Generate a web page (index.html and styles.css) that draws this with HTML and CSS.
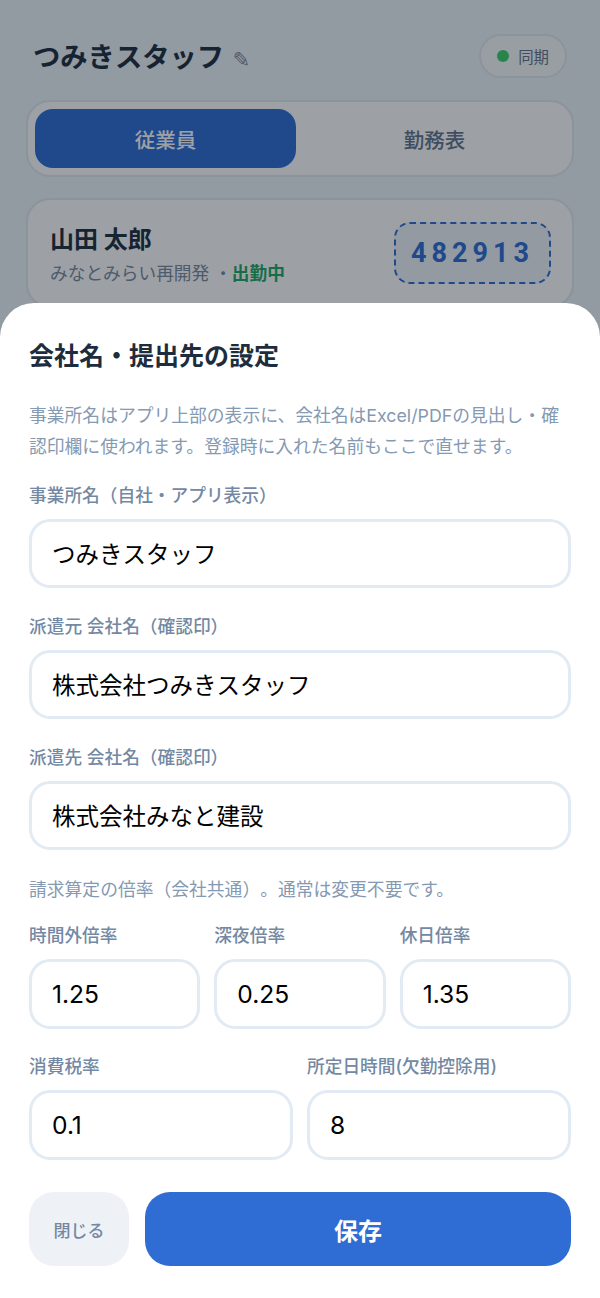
FILE: index.html
```html
<!DOCTYPE html>
<html lang="ja">
<head>
    <meta charset="UTF-8">
    <meta name="viewport" content="width=device-width, initial-scale=1.0">
    <title>つみきスタッフ</title>
    <link rel="stylesheet" href="styles.css">
</head>
<body>
    <div class="app">
        <header class="app-header">
            <h1 class="app-title">つみきスタッフ <span class="edit-mark">✎</span></h1>
            <div class="sync-pill"><span class="sync-dot"></span>同期</div>
        </header>
        <nav class="tabs">
            <div class="tab tab-active">従業員</div>
            <div class="tab">勤務表</div>
        </nav>
        <div class="staff-card">
            <div class="staff-info">
                <div class="staff-name">山田 太郎</div>
                <div class="staff-sub">みなとみらい再開発 ・<span class="staff-status">出勤中</span></div>
            </div>
            <div class="staff-code">482913</div>
        </div>
    </div>

    <div class="overlay"></div>

    <div class="sheet">
        <h2 class="sheet-title">会社名・提出先の設定</h2>
        <p class="hint hint-top">事業所名はアプリ上部の表示に、会社名はExcel/PDFの見出し・確認印欄に使われます。登録時に入れた名前もここで直せます。</p>

        <div class="field">
            <label class="field-label" for="office">事業所名（自社・アプリ表示）</label>
            <input class="field-input" id="office" type="text" value="つみきスタッフ">
        </div>
        <div class="field">
            <label class="field-label" for="from">派遣元 会社名（確認印）</label>
            <input class="field-input" id="from" type="text" value="株式会社つみきスタッフ">
        </div>
        <div class="field">
            <label class="field-label" for="to">派遣先 会社名（確認印）</label>
            <input class="field-input" id="to" type="text" value="株式会社みなと建設">
        </div>

        <p class="hint hint-rates">請求算定の倍率（会社共通）。通常は変更不要です。</p>

        <div class="row row-3">
            <div class="field">
                <label class="field-label" for="over">時間外倍率</label>
                <input class="field-input field-num" id="over" type="text" value="1.25">
            </div>
            <div class="field">
                <label class="field-label" for="night">深夜倍率</label>
                <input class="field-input field-num" id="night" type="text" value="0.25">
            </div>
            <div class="field">
                <label class="field-label" for="holiday">休日倍率</label>
                <input class="field-input field-num" id="holiday" type="text" value="1.35">
            </div>
        </div>
        <div class="row row-2">
            <div class="field">
                <label class="field-label" for="tax">消費税率</label>
                <input class="field-input field-num" id="tax" type="text" value="0.1">
            </div>
            <div class="field">
                <label class="field-label" for="hours">所定日時間(欠勤控除用)</label>
                <input class="field-input field-num" id="hours" type="text" value="8">
            </div>
        </div>

        <div class="actions">
            <button class="btn btn-close">閉じる</button>
            <button class="btn btn-save">保存</button>
        </div>
    </div>
</body>
</html>
```

FILE: styles.css
```css
* {
    box-sizing: border-box;
}
html, body {
    height: 100%;
}
body {
    font-family: Inter, "Noto Sans CJK JP", sans-serif;
    text-spacing-trim: space-all;
    background-color: #edf3fb;
    color: #1e2d3d;
    margin: 0;
    overflow: hidden;
}

/* page behind the sheet */
.app {
    padding: 34px 26px 0;
}
.app-header {
    display: flex;
    justify-content: space-between;
    align-items: center;
    padding: 0 7px;
    height: 44px;
    margin-bottom: 22px;
}
.app-title {
    font-size: 27.3px;
    font-weight: 700;
    margin: 0;
    padding-top: 6px;
    line-height: 44px;
}
.edit-mark {
    font-family: "DejaVu Sans", sans-serif;
    font-size: 21px;
    font-weight: 400;
    color: #7a8aa0;
    margin-left: 2px;
}
.sync-pill {
    display: flex;
    align-items: center;
    gap: 9px;
    height: 44px;
    padding: 0 16px;
    font-size: 15.4px;
    color: #64748b;
    background: #f8fafc;
    border: 2px solid #e2e8f0;
    border-radius: 22px;
}
.sync-dot {
    width: 12px;
    height: 12px;
    border-radius: 50%;
    background: #3bd06a;
}
.tabs {
    display: flex;
    gap: 8px;
    height: 77px;
    padding: 7px;
    background: #fff;
    border: 2px solid #e2e8f0;
    border-radius: 24px;
    margin-bottom: 21px;
}
.tab {
    flex: 1;
    display: flex;
    align-items: center;
    justify-content: center;
    border-radius: 18px;
    font-size: 20.5px;
    font-weight: 500;
    color: #64748b;
}
.tab-active {
    background: #2f6dd5;
    color: #fff;
}
.staff-card {
    display: flex;
    justify-content: space-between;
    align-items: center;
    height: 110px;
    padding: 0 21px 0 22px;
    background: #fff;
    border: 2px solid #e2e8f0;
    border-radius: 24px;
}
.staff-info {
    padding-top: 5px;
}
.staff-name {
    font-size: 24px;
    font-weight: 700;
    line-height: 32px;
    margin-bottom: 5px;
}
.staff-sub {
    font-size: 17.7px;
    line-height: 26px;
    color: #7a8aa0;
}
.staff-status {
    color: #22a866;
    font-weight: 700;
}
.staff-code {
    width: 157px;
    height: 62px;
    display: flex;
    align-items: center;
    justify-content: center;
    font-family: Roboto, sans-serif;
    font-size: 27px;
    font-weight: 700;
    letter-spacing: 5px;
    color: #2f6dd5;
    background: #eef3fb;
    border: 2px dashed #2f6dd5;
    border-radius: 16px;
}
.overlay {
    position: fixed;
    inset: 0;
    background: rgba(10, 20, 30, 0.4);
}

/* bottom sheet */
.sheet {
    position: fixed;
    left: 0;
    right: 0;
    bottom: 0;
    background: #fff;
    border-radius: 34px 34px 0 0;
    padding: 36px 29px 32px;
}
.sheet-title {
    font-size: 25px;
    font-weight: 700;
    line-height: 34px;
    margin: 0 0 27px;
}
.hint {
    font-size: 17.8px;
    line-height: 31px;
    color: #8499b2;
    margin: 0;
}
.hint-top {
    margin-bottom: 21.5px;
}
.hint-rates {
    margin-top: -3px;
    margin-bottom: 19.5px;
}
.field {
    margin-bottom: 26.5px;
    min-width: 0;
}
.field-label {
    display: block;
    font-size: 17.7px;
    font-weight: 500;
    line-height: 24px;
    color: #7388a3;
    margin-bottom: 11px;
}
.field-input {
    display: block;
    width: 100%;
    height: 69.5px;
    padding: 0 20px;
    font-family: inherit;
    font-size: 23.5px;
    color: #000;
    background: #fff;
    border: 3px solid #e2eaf4;
    border-radius: 21px;
    outline: none;
}
.field-num {
    font-size: 24.6px;
}
.row {
    display: grid;
    gap: 14px;
}
.row-3 {
    grid-template-columns: repeat(3, 1fr);
}
.row-2 {
    grid-template-columns: repeat(2, 1fr);
}
.row-2 .field {
    margin-bottom: 0;
}
.actions {
    display: flex;
    gap: 16px;
    margin-top: 32.5px;
}
.btn {
    height: 74px;
    border: none;
    border-radius: 25px;
    font-family: inherit;
    cursor: pointer;
}
.btn-close {
    width: 100px;
    font-size: 17px;
    font-weight: 500;
    color: #7388a3;
    background: #eef2f7;
}
.btn-save {
    flex: 1;
    font-size: 24px;
    font-weight: 700;
    color: #fff;
    background: #2f6dd5;
}
```
